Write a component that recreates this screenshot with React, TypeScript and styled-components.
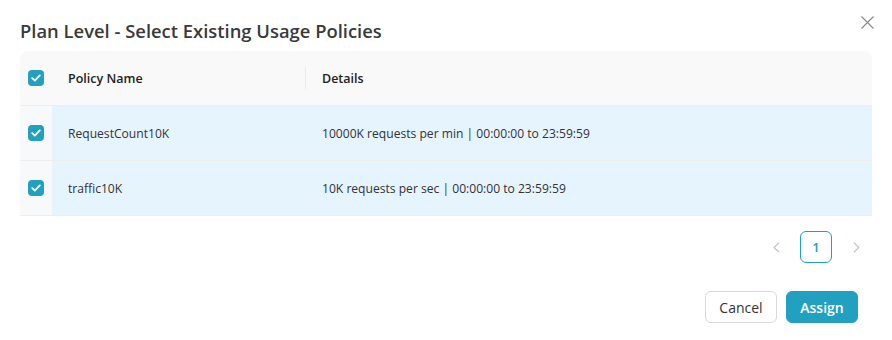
import React from 'react'
import styled, {createGlobalStyle} from 'styled-components'

const accent = '#22a0bf'

const GlobalStyle = createGlobalStyle`
  * {
    box-sizing: border-box;
  }
  body {
    margin: 0;
    background: #ffffff;
    font-family: "Open Sans", "Liberation Sans", sans-serif;
    color: #333333;
  }
`

type Policy = {
    name: string
    details: string
}

const policies: Policy[] = [
    {name: 'RequestCount10K', details: '10000K requests per min | 00:00:00 to 23:59:59'},
    {name: 'traffic10K', details: '10K requests per sec | 00:00:00 to 23:59:59'},
]

const CheckIcon = () => (
    <svg width="10" height="8" viewBox="0 0 10 8" fill="none">
        <path d="M1.2 4.1L3.8 6.6L8.8 1.4" stroke="#fff" strokeWidth="1.8" strokeLinecap="round" strokeLinejoin="round"/>
    </svg>
)

const Check = () => (
    <CheckBox>
        <CheckIcon/>
    </CheckBox>
)

export default function App() {
    return (
        <>
            <GlobalStyle/>
            <Modal>
                <ModalHeader>
                    <Title>Plan Level - Select Existing Usage Policies</Title>
                    <CloseButton aria-label="close">
                        <svg width="13" height="13" viewBox="0 0 13 13">
                            <path d="M0.5 0.5L12.5 12.5M12.5 0.5L0.5 12.5" stroke="#8c8c8c" strokeWidth="1.2"/>
                        </svg>
                    </CloseButton>
                </ModalHeader>

                <Table>
                    <HeadRow>
                        <CheckCell head><Check/></CheckCell>
                        <HeadCell divider>Policy Name</HeadCell>
                        <HeadCell>Details</HeadCell>
                    </HeadRow>
                    {policies.map(p => (
                        <Row key={p.name}>
                            <CheckCell><Check/></CheckCell>
                            <Cell>{p.name}</Cell>
                            <Cell>{p.details}</Cell>
                        </Row>
                    ))}
                </Table>

                <Pagination>
                    <PageArrow>
                        <svg width="7" height="11" viewBox="0 0 7 11">
                            <path d="M6 0.8L1.2 5.5L6 10.2" stroke="#c4c4c4" strokeWidth="1.2" fill="none"/>
                        </svg>
                    </PageArrow>
                    <PageItem active>1</PageItem>
                    <PageArrow>
                        <svg width="7" height="11" viewBox="0 0 7 11">
                            <path d="M1 0.8L5.8 5.5L1 10.2" stroke="#c4c4c4" strokeWidth="1.2" fill="none"/>
                        </svg>
                    </PageArrow>
                </Pagination>

                <Footer>
                    <Button>Cancel</Button>
                    <Button primary>Assign</Button>
                </Footer>
            </Modal>
        </>
    )
}

const Modal = styled.div`
  width: 892px;
  padding: 0 20px 0 20px;
`

const ModalHeader = styled.div`
  display: flex;
  justify-content: space-between;
  align-items: flex-start;
  padding-top: 19px;
  margin-bottom: 9px;
`

const Title = styled.h2`
  margin: 0;
  font-size: 18.4px;
  line-height: 23px;
  font-weight: 600;
  color: #3a3a3a;
`

const CloseButton = styled.button`
  border: none;
  background: none;
  padding: 0;
  margin-top: -3px;
  margin-right: -2px;
  width: 13px;
  height: 13px;
  display: flex;
  cursor: pointer;
`

const Table = styled.div`
  width: 852px;
  font-size: 12.1px;
`

const gridRow = `
  display: grid;
  grid-template-columns: 32px 254px 1fr;
  border-bottom: 1px solid #eeeeee;
`

const HeadRow = styled.div`
  ${gridRow};
  height: 55px;
  background: #f9f9f9;
  border-radius: 8px 8px 0 0;
`

const Row = styled.div`
  ${gridRow};
  height: 55px;
  background: #e6f4fe;
`

const CheckCell = styled.div<{head?: boolean}>`
  display: flex;
  align-items: center;
  justify-content: center;
  background: ${p => p.head ? 'transparent' : '#f7f9fb'};
`

const CheckBox = styled.span`
  width: 16px;
  height: 16px;
  border-radius: 4px;
  background: ${accent};
  display: flex;
  align-items: center;
  justify-content: center;
`

const HeadCell = styled.div<{divider?: boolean}>`
  position: relative;
  display: flex;
  align-items: center;
  padding-left: 16px;
  font-weight: 600;
  font-size: 12.5px;
  color: #222222;

  &::after {
    content: '';
    display: ${p => p.divider ? 'block' : 'none'};
    position: absolute;
    right: 0;
    top: 16px;
    bottom: 16px;
    width: 1px;
    background: #ebebeb;
  }
`

const Cell = styled.div`
  display: flex;
  align-items: center;
  padding-left: 16px;
  color: #333333;
`

const Pagination = styled.div`
  display: flex;
  justify-content: flex-end;
  gap: 8px;
  margin-top: 15px;
`

const PageArrow = styled.span`
  width: 32px;
  height: 32px;
  display: flex;
  align-items: center;
  justify-content: center;
`

const PageItem = styled.span<{active?: boolean}>`
  width: 32px;
  height: 32px;
  display: flex;
  align-items: center;
  justify-content: center;
  border: 1px solid ${p => p.active ? accent : '#d9d9d9'};
  border-radius: 6px;
  color: ${accent};
  font-size: 13px;
  font-weight: 600;
`

const Footer = styled.div`
  display: flex;
  justify-content: flex-end;
  gap: 9px;
  margin-top: 28px;
  padding-right: 14px;
`

const Button = styled.button<{primary?: boolean}>`
  width: 72px;
  height: 32px;
  border-radius: 6px;
  font-family: inherit;
  font-size: 14px;
  font-weight: ${p => p.primary ? 600 : 400};
  cursor: pointer;
  border: 1px solid ${p => p.primary ? accent : '#d9d9d9'};
  background: ${p => p.primary ? accent : '#ffffff'};
  color: ${p => p.primary ? '#ffffff' : '#333333'};
`
